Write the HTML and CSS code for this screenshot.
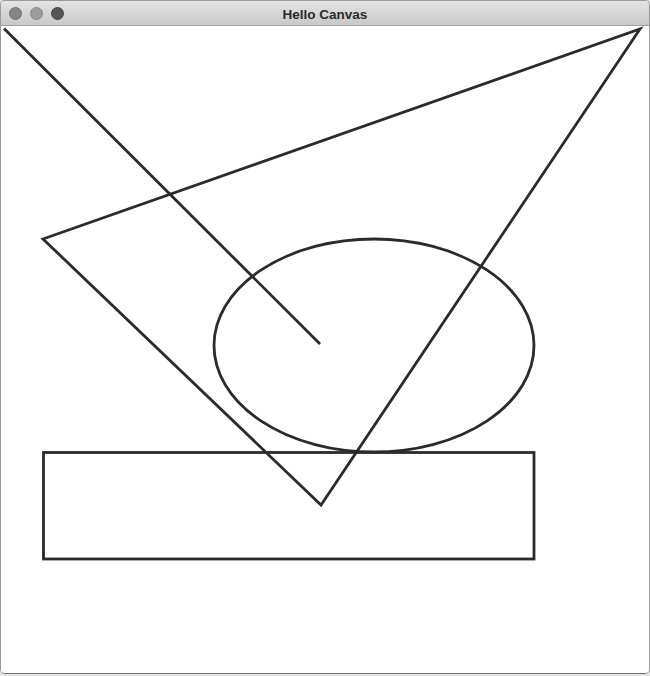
FILE: index.html
```html
<!DOCTYPE html>
<html>
<head>
<meta charset="utf-8">
<title>Hello Canvas</title>
<link rel="stylesheet" href="styles.css">
</head>
<body>
<div class="window">
  <div class="titlebar">
    <div class="lights">
      <span class="light close"></span>
      <span class="light min"></span>
      <span class="light max"></span>
    </div>
    <div class="title">Hello Canvas</div>
  </div>
  <div class="content">
    <svg class="canvas" width="647" height="646" viewBox="0 0 647 646" xmlns="http://www.w3.org/2000/svg">
      <g fill="none" stroke="#2b2b2b" stroke-width="2.8" stroke-linejoin="miter">
        <line x1="3" y1="2.5" x2="319" y2="318"/>
        <polygon points="42,213 639,3 320,479"/>
        <ellipse cx="373" cy="319.5" rx="160" ry="106.5"/>
        <rect x="42.5" y="426.5" width="490.5" height="106.5"/>
      </g>
    </svg>
  </div>
</div>
</body>
</html>
```

FILE: styles.css
```css
html, body {
  margin: 0;
  padding: 0;
}
body {
  width: 650px;
  height: 676px;
  background: #e4e4e4;
  overflow: hidden;
  font-family: "Liberation Sans", Arial, sans-serif;
}
.window {
  width: 648px;
  height: 672px;
  border: 1px solid #9a9a9a;
  border-bottom-color: #6f6f6f;
  border-radius: 5px;
  background: #ffffff;
  overflow: hidden;
  display: flex;
  flex-direction: column;
}
.titlebar {
  position: relative;
  height: 24px;
  flex: none;
  background: linear-gradient(#e4e4e4, #c8c8c8);
  border-bottom: 1px solid #a2a2a2;
  display: flex;
  align-items: center;
  justify-content: center;
}
.lights {
  position: absolute;
  left: 8px;
  top: 6px;
  display: flex;
  gap: 8px;
}
.light {
  width: 13px;
  height: 13px;
  border-radius: 50%;
  box-sizing: border-box;
}
.close {
  background: #858585;
  border: 1px solid #707070;
}
.min {
  background: #9c9c9c;
  border: 1px solid #888888;
}
.max {
  background: #555555;
  border: 1px solid #444444;
}
.title {
  font-size: 13.5px;
  font-weight: bold;
  color: #2a2a2a;
  padding-top: 2px;
}
.content {
  flex: 1;
  position: relative;
  overflow: hidden;
  background: #ffffff;
}
.canvas {
  display: block;
}
```
